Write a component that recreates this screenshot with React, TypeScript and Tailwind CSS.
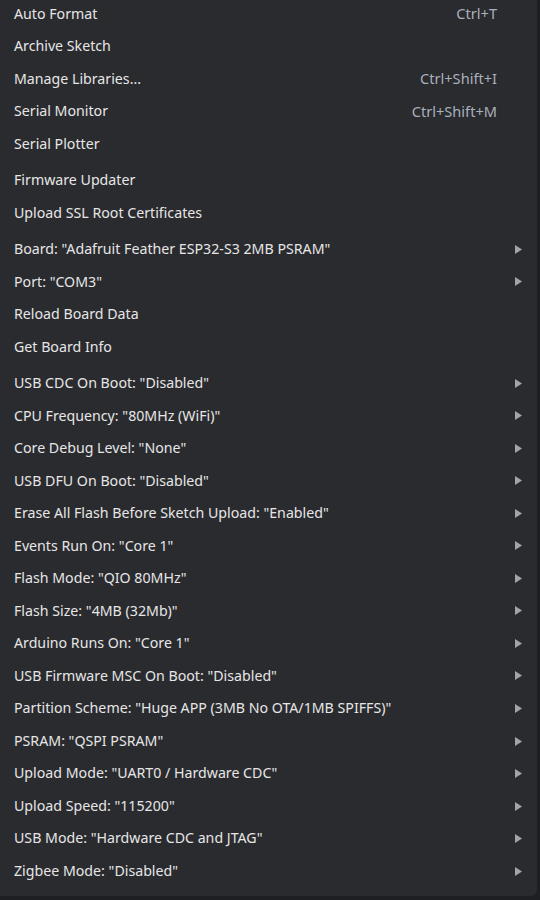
import React from "react";

type Item = { label: string; shortcut?: string; sub?: boolean } | "sep";

const items: Item[] = [
  { label: "Auto Format", shortcut: "Ctrl+T" },
  { label: "Archive Sketch" },
  { label: "Manage Libraries...", shortcut: "Ctrl+Shift+I" },
  { label: "Serial Monitor", shortcut: "Ctrl+Shift+M" },
  { label: "Serial Plotter" },
  "sep",
  { label: "Firmware Updater" },
  { label: "Upload SSL Root Certificates" },
  "sep",
  { label: 'Board: "Adafruit Feather ESP32-S3 2MB PSRAM"', sub: true },
  { label: 'Port: "COM3"', sub: true },
  { label: "Reload Board Data" },
  { label: "Get Board Info" },
  "sep",
  { label: 'USB CDC On Boot: "Disabled"', sub: true },
  { label: 'CPU Frequency: "80MHz (WiFi)"', sub: true },
  { label: 'Core Debug Level: "None"', sub: true },
  { label: 'USB DFU On Boot: "Disabled"', sub: true },
  { label: 'Erase All Flash Before Sketch Upload: "Enabled"', sub: true },
  { label: 'Events Run On: "Core 1"', sub: true },
  { label: 'Flash Mode: "QIO 80MHz"', sub: true },
  { label: 'Flash Size: "4MB (32Mb)"', sub: true },
  { label: 'Arduino Runs On: "Core 1"', sub: true },
  { label: 'USB Firmware MSC On Boot: "Disabled"', sub: true },
  { label: 'Partition Scheme: "Huge APP (3MB No OTA/1MB SPIFFS)"', sub: true },
  { label: 'PSRAM: "QSPI PSRAM"', sub: true },
  { label: 'Upload Mode: "UART0 / Hardware CDC"', sub: true },
  { label: 'Upload Speed: "115200"', sub: true },
  { label: 'USB Mode: "Hardware CDC and JTAG"', sub: true },
  { label: 'Zigbee Mode: "Disabled"', sub: true },
];

function Arrow() {
  return (
    <svg width="7" height="9" viewBox="0 0 7 9" className="block">
      <path d="M0 0 L7 4.5 L0 9 Z" fill="#a3a4a8" />
    </svg>
  );
}

export default function App() {
  return (
    <div
      className="w-[540px] h-[900px] overflow-hidden bg-[#1e1f22]"
      style={{ fontFamily: '"Noto Sans", "Open Sans", sans-serif' }}
    >
      <div className="w-[537px] h-[896px] bg-[#2a2b2f] rounded-br-[6px] overflow-hidden">
        <div className="mt-[-2.6px] flex flex-col">
          {items.map((it, i) =>
            it === "sep" ? (
              <div key={i} className="h-[4px]" />
            ) : (
              <div
                key={i}
                className="h-[32.53px] flex items-center pl-[14px] pr-[15px] text-[14.2px] text-[#e6e6e6] leading-none"
              >
                <span className="flex-1 whitespace-nowrap">{it.label}</span>
                {it.shortcut && (
                  <span className="text-[#a9b0ba] text-[14.6px] mr-[25px] whitespace-nowrap">
                    {it.shortcut}
                  </span>
                )}
                {it.sub && <Arrow />}
              </div>
            )
          )}
        </div>
      </div>
    </div>
  );
}
